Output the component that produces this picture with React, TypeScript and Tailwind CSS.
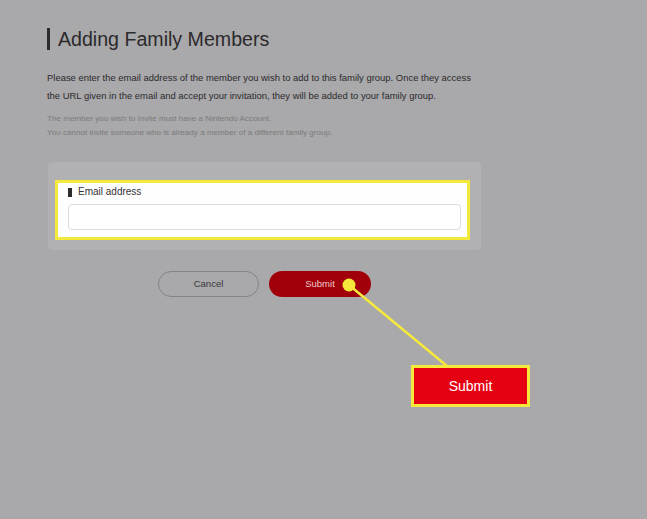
import React from 'react';

export default function App() {
  return (
    <div className="relative w-[647px] h-[519px] bg-[#a9a8aa] overflow-hidden" style={{ fontFamily: '"Liberation Sans", Arial, sans-serif' }}>
      <div className="pl-[47px] pt-[28px] w-[540px]">
        <div className="flex items-center gap-[8px]">
          <div className="w-[3px] h-[22px] bg-[#2b2a2c]" />
          <h1 className="text-[19.6px] leading-[22px] text-[#2b2a2c]">Adding Family Members</h1>
        </div>

        <p className="mt-[19px] text-[9.45px] leading-[18px] text-[#2b2a2c]">
          Please enter the email address of the member you wish to add to this family group. Once they access<br />
          the URL given in the email and accept your invitation, they will be added to your family group.
        </p>

        <div className="mt-[7px] text-[8.1px] leading-[14px] text-[#7b7a7c]">
          <p>The member you wish to invite must have a Nintendo Account.</p>
          <p>You cannot invite someone who is already a member of a different family group.</p>
        </div>

        <div className="mt-[22px] ml-px w-[433px] h-[88px] rounded-[4px] bg-[#b1b0b2] pt-[18px] px-[7px]">
          <div className="w-[415px] h-[60px] border-[3px] border-[#f3e83c] bg-[#fefefe] px-[10px] pt-[2px]">
            <div className="flex items-center gap-[6px]">
              <div className="w-[4px] h-[9px] bg-[#2b2a2c]" />
              <span className="text-[10px] leading-[14px] text-[#333234]">Email address</span>
            </div>
            <div className="mt-[5px] w-[393px] h-[26px] rounded-[4px] border border-[#dcdbdd] bg-white" />
          </div>
        </div>

        <div className="mt-[21px] flex gap-[10px] pl-[111px]">
          <button className="w-[101px] h-[26px] rounded-full border border-[#858486] text-[9.5px] text-[#3a393b]">Cancel</button>
          <button className="w-[102px] h-[26px] rounded-full bg-[#a1000b] text-[9.5px] text-[#f1c9cc]">Submit</button>
        </div>
      </div>

      <svg className="absolute left-0 top-0" width="647" height="519">
        <line x1="349" y1="285" x2="447" y2="366" stroke="#f5ea3c" strokeWidth="2.5" />
        <circle cx="349" cy="285" r="6.5" fill="#f5ea3c" />
      </svg>

      <div className="absolute left-[411px] top-[365px] w-[119px] h-[42px] border-[3px] border-[#f5ea3c] bg-[#e50012] flex items-center justify-center">
        <span className="text-[14px] text-white">Submit</span>
      </div>
    </div>
  );
}
